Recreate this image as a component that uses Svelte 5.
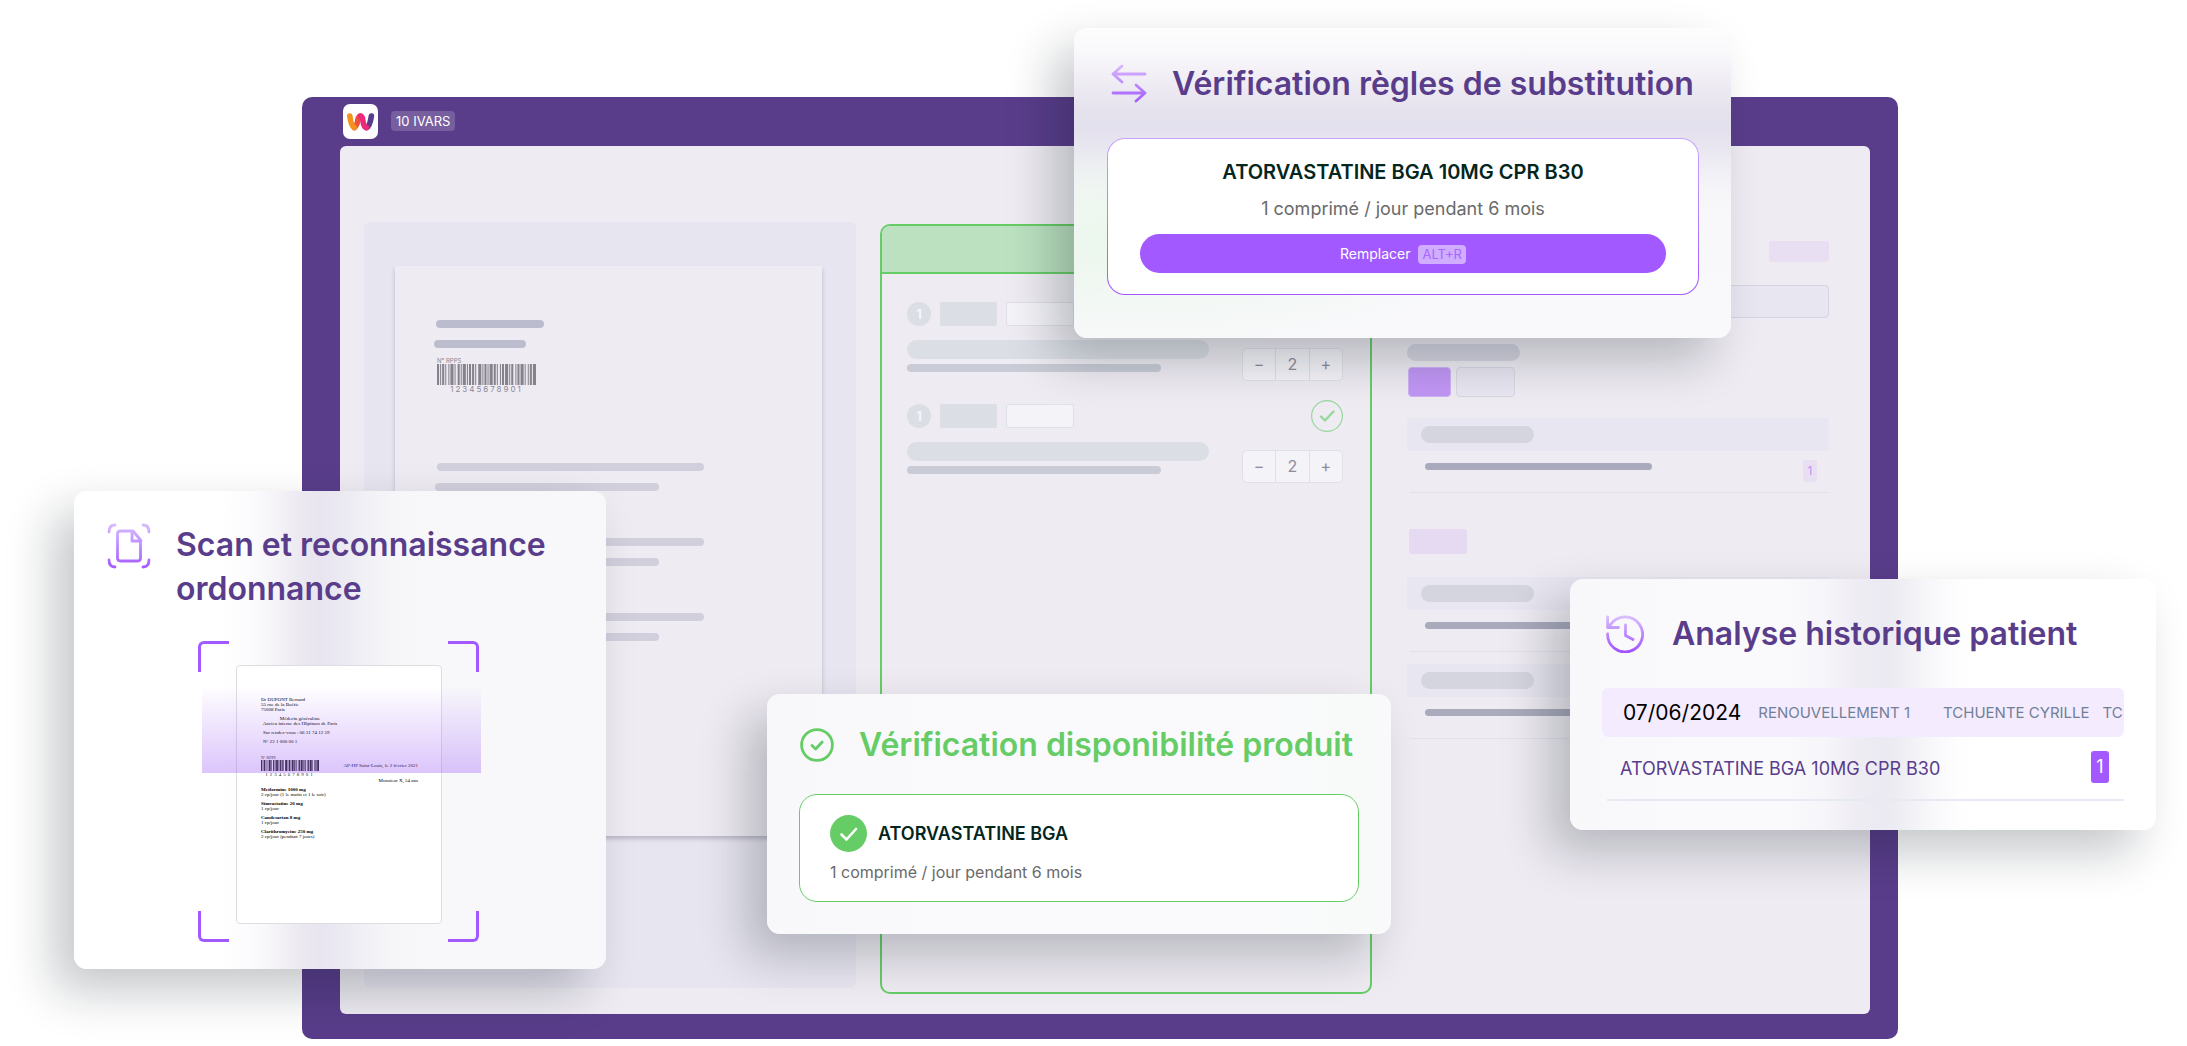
<script>
  const bars = [2,1,1,1,2,1,1,2,1,1,3,1,1,2,2,1,1,1,3,1,1,1,2,1,2,1,1,2,3,1,1,1,2,1,1,1,3,1,2,1,1,2,1,1,2,1,3,1,1,1,2,2,1,1,2,1,3,1,1,2,1,1,2,1,3];
  const strips = [];
  let total = 0;
  bars.forEach((w, i) => {
    if (i % 2 === 0) strips.push({ x: total, w });
    total += w;
  });
  const paragraphs = [1, 2, 3];
  const products = [{ ok: false }, { ok: true }];
  const history = [1, 2];
</script>

{#snippet barcode()}
  <svg class="bars" viewBox="0 0 {total} 20" preserveAspectRatio="none" aria-hidden="true">
    {#each strips as s}<rect x={s.x} y="0" width={s.w} height="20" />{/each}
  </svg>
{/snippet}

<main class="stage">
  <section class="app">
    <header class="topbar">
      <svg class="logo" viewBox="0 0 35 35" role="img" aria-label="Logo">
        <rect width="35" height="35" rx="7" fill="#fff" />
        <g fill="none" stroke-width="5.600" stroke-linecap="round">
          <path d="M28.400 12 Q26.800 22.500 23.600 23.600" stroke="#5a3c8c" />
          <path d="M11.400 23.600 Q14.400 21 15 15 Q16 12 17.500 12" stroke="#f0503c" />
          <path d="M17.400 12 Q19.400 12 19.800 16 Q20.600 23.600 23.400 23.600" stroke="#ec2a7b" />
          <path d="M6.800 12 Q8 22 11.200 23.600" stroke="#f4921e" />
        </g>
      </svg>
      <span class="tag">10 IVARS</span>
    </header>

    <div class="workspace">
      <div class="viewer">
        <div class="sheet">
          <div class="line dark l108"></div>
          <div class="line dark l92 second"></div>
          <div class="code">
            <span>N° RPPS</span>
            {@render barcode()}
            <span class="digits">12345678901</span>
          </div>
          {#each paragraphs as p (p)}
            <div class="para">
              <div class="line l267"></div>
              <div class="line l224 second"></div>
            </div>
          {/each}
        </div>
      </div>

      <div class="order">
        <div class="order-head"></div>
        {#each products as p}
          <div class="product">
            <div class="product-top">
              <span class="num">1</span>
              <div class="chip"></div>
              <div class="field"></div>
              {#if p.ok}
                <svg class="ok" viewBox="0 0 32 32" fill="none" stroke="#96d89b" aria-hidden="true">
                  <circle cx="16" cy="16" r="15.4" stroke-width="1.2" />
                  <path d="M10 16.5 14 20.5 22.5 11.5" stroke-width="2.4" stroke-linecap="round" stroke-linejoin="round" />
                </svg>
              {/if}
            </div>
            <div class="product-body">
              <div class="names">
                <div class="name"></div>
                <div class="sub"></div>
              </div>
              <div class="stepper">
                <button type="button" aria-label="Diminuer">−</button>
                <output>2</output>
                <button type="button" aria-label="Augmenter">+</button>
              </div>
            </div>
          </div>
        {/each}
      </div>

      <div class="record">
        <div class="lilac end"></div>
        <div class="search"></div>
        <div class="pill"></div>
        <div class="tabs"><div class="tab on"></div><div class="tab"></div></div>
        <div class="band"><div class="pill"></div></div>
        <div class="entry"><div class="bar"></div><span class="count">1</span></div>
        <div class="lilac start"></div>
        {#each history as h (h)}
          <div class="band again"><div class="pill"></div></div>
          <div class="entry short"><div class="bar"></div></div>
        {/each}
      </div>
    </div>
  </section>

  <article class="card rules">
    <header>
      <svg class="i-swap" viewBox="0 0 36 40" fill="none" stroke="url(#gs)" stroke-width="2.8" stroke-linecap="round" stroke-linejoin="round" aria-hidden="true">
        <defs><linearGradient id="gs" gradientUnits="userSpaceOnUse" x1="0" y1="0" x2="0" y2="40"><stop stop-color="#d9bdff" /><stop offset="1" stop-color="#a259ff" /></linearGradient></defs>
        <path d="M34 11H2M11 3 2 11l9 8M2 30h32M25 22l9 8-9 8" />
      </svg>
      <h2>Vérification règles de substitution</h2>
    </header>
    <div class="panel violet">
      <strong>ATORVASTATINE BGA 10MG CPR B30</strong>
      <p>1 comprimé / jour pendant 6 mois</p>
      <button type="button" class="replace">Remplacer <kbd>ALT+R</kbd></button>
    </div>
  </article>

  <article class="card scan">
    <header>
      <svg class="i-scan" viewBox="0 0 44 46" fill="none" stroke="url(#gd)" stroke-width="2.8" stroke-linecap="round" stroke-linejoin="round" aria-hidden="true">
        <defs><linearGradient id="gd" gradientUnits="userSpaceOnUse" x1="0" y1="0" x2="0" y2="46"><stop stop-color="#d9bdff" /><stop offset="1" stop-color="#a259ff" /></linearGradient></defs>
        <path d="M8 2q-6 0-6 7M36 2q6 0 6 7M2 37q0 7 6 7M42 37q0 7-6 7" />
        <path d="M26 8H13.500q-3 0-3 3V35q0 3 3 3h17q3 0 3-3V17ZM25 8v10h9" />
      </svg>
      <h2>Scan et reconnaissance ordonnance</h2>
    </header>
    <div class="frame">
      <i class="corner tl"></i><i class="corner tr"></i><i class="corner bl"></i><i class="corner br"></i>
      <div class="doc">
        <p>Dr DUPONT Bernard<br />55 rue de la Boétie<br />75008 Paris</p>
        <p class="mid">Médecin généraliste<br />Ancien interne des Hôpitaux de Paris</p>
        <p class="in">Sur rendez-vous : 06 31 74 12 59</p>
        <p class="in">N° 22 1 000 00 1</p>
        <div class="doc-row">
          <div class="code mini">
            <span>N° RPPS</span>
            {@render barcode()}
            <span class="digits">12345678901</span>
          </div>
          <p>AP-HP Saint-Louis, le 2 février 2021</p>
        </div>
        <p class="who">Monsieur X, 54 ans</p>
        <p class="rx"><b>Metformine 1000 mg</b><br />2 cp/jour (1 le matin et 1 le soir)</p>
        <p><b>Simvastatine 20 mg</b><br />1 cp/jour</p>
        <p><b>Candesartan 8 mg</b><br />1 cp/jour</p>
        <p><b>Clarithromycine 250 mg</b><br />2 cp/jour (pendant 7 jours)</p>
      </div>
      <div class="beam"></div>
    </div>
  </article>

  <article class="card stock">
    <header>
      <svg class="i-check" viewBox="0 0 34 34" fill="none" stroke="#66cc66" stroke-width="2.800" stroke-linecap="round" stroke-linejoin="round" aria-hidden="true">
        <circle cx="17" cy="17" r="15.400" /><path d="m12 17.500 3.600 3.500 6.600-7" />
      </svg>
      <h2>Vérification disponibilité produit</h2>
    </header>
    <div class="panel green">
      <div class="found">
        <svg viewBox="0 0 37 37" aria-hidden="true"><circle cx="18.500" cy="18.500" r="18.500" fill="#66cc66" /><path d="m11.500 19.500 5 5 9.500-10.500" fill="none" stroke="#fff" stroke-width="2.600" stroke-linecap="round" stroke-linejoin="round" /></svg>
        <strong>ATORVASTATINE BGA</strong>
      </div>
      <p>1 comprimé / jour pendant 6 mois</p>
    </div>
  </article>

  <article class="card past">
    <header>
      <svg class="i-clock" viewBox="0 0 38 38" fill="none" stroke="url(#gc)" stroke-width="2.800" stroke-linecap="round" stroke-linejoin="round" aria-hidden="true">
        <defs><linearGradient id="gc" gradientUnits="userSpaceOnUse" x1="0" y1="0" x2="0" y2="38"><stop stop-color="#dcc2ff" /><stop offset="1" stop-color="#a04fff" /></linearGradient></defs>
        <path d="M1.600 19A17.500 17.500 0 1 0 5 9L1.600 12.500M1.600 2v10.500H12.500M19.500 10v10.500l7.500 4" />
      </svg>
      <h2>Analyse historique patient</h2>
    </header>
    <div class="visit">
      <time datetime="2024-06-07">07/06/2024</time>
      <span>RENOUVELLEMENT 1</span>
      <span class="doctor">TCHUENTE CYRILLE</span>
      <span>TC</span>
    </div>
    <div class="drug"><span>ATORVASTATINE BGA 10MG CPR B30</span><b>1</b></div>
  </article>
</main>

<style>
  :global(body) { margin: 0; background: #fff; }
  .stage, .stage :global(*) { box-sizing: border-box; }
  .stage { position: relative; overflow: hidden; padding: 97px 289px 7px 302px; font-family: Inter, "Liberation Sans", sans-serif; }
  h2, p { margin: 0; }
  button { font: inherit; border: 0; padding: 0; }

  .app { background: #593d8b; border-radius: 10px; padding: 0 28px 25px 38px; }
  .topbar { height: 49px; padding: 7px 3px 0; display: flex; align-items: flex-start; gap: 13px; }
  .logo { width: 35px; height: 35px; }
  .tag { margin-top: 7px; height: 20px; padding: 0 5px; border-radius: 4px; background: #765e9f; color: #fff; font-size: 13px; line-height: 20px; }

  .workspace { background: #eeebf2; border-radius: 6px; padding: 76px 41px 20px 24px; display: grid; grid-template-columns: 492fr 492fr 433fr; column-gap: 24px; height: 868px; }
  .viewer { background: #e7e5f0; border-radius: 6px; padding: 44px 34px 0 31px; height: 766px; }
  .sheet { background: #eeebf2; height: 570px; padding: 54px 38px 0; box-shadow: 0 3px 4px rgba(60, 55, 80, .25); }
  .line { height: 8px; border-radius: 4px; background: #d1cfdc; margin-left: 3px; }
  .line.dark { background: #bbbdce; }
  .line.second { margin: 12px 0 0 1px; }
  .l108 { width: 108px; } .l92 { width: 92px; } .l267 { width: 267px; } .l224 { width: 224px; }
  .code { display: flex; flex-direction: column; width: 99px; margin: 10px 0 70px 4px; color: #8b8892; font-size: 6px; line-height: 6px; }
  .bars { display: block; width: 100%; height: 21px; fill: #86828c; }
  .digits { align-self: center; font-size: 8px; line-height: 8px; letter-spacing: 2px; }
  .para { margin: 0 0 47px 1px; }

  .order { border: 2px solid #66cc66; border-radius: 10px; margin-top: 2px; height: 770px; overflow: hidden; }
  .order-head { height: 48px; background: #bbe1c0; border-bottom: 2px solid #66cc66; }
  .product { padding: 28px 27px 0 25px; height: 102px; }
  .product-top { display: flex; align-items: center; height: 24px; }
  .num { width: 24px; height: 24px; border-radius: 50%; background: #dbdee5; color: #f6f5f9; font-size: 13px; font-weight: 700; line-height: 24px; text-align: center; margin-right: 9px; }
  .chip { width: 57px; height: 24px; border-radius: 2px; background: #dbdee5; margin-right: 9px; }
  .field { width: 68px; height: 24px; border-radius: 2px; background: #f4f3f8; border: 1px solid #dfe0e8; }
  .ok { width: 32px; height: 32px; margin-left: auto; }
  .product-body { display: flex; align-items: flex-start; justify-content: space-between; padding-top: 14px; }
  .name { width: 302px; height: 19px; border-radius: 10px; background: #dbdee5; }
  .sub { width: 254px; height: 8px; border-radius: 4px; background: #c9ccd6; margin-top: 5px; }
  .stepper { display: flex; width: 101px; height: 33px; margin-top: 8px; border: 1px solid #dfe0e8; border-radius: 5px; background: #f4f3f8; color: #8f8d9c; font-size: 16px; }
  .stepper > * { flex: 1; background: none; color: inherit; line-height: 31px; text-align: center; }
  .stepper output { border: solid #dfe0e8; border-width: 0 1px; }

  .record { padding: 19px 0 0 11px; display: flex; flex-direction: column; }
  .lilac { background: #e9dff3; border-radius: 3px; }
  .end { align-self: flex-end; width: 60px; height: 21px; }
  .start { width: 58px; height: 25px; margin: 36px 0 0 2px; background: #e5daf2; }
  .search { height: 33px; margin: 23px 0 26px; border: 1px solid #d3d4e0; border-radius: 4px; background: #e8e6f1; }
  .pill { width: 113px; height: 17px; border-radius: 9px; background: #d5d5e0; }
  .tabs { display: flex; gap: 5px; margin: 6px 0 21px 1px; }
  .tab { width: 59px; height: 30px; border: 1px solid #d8d7e3; border-radius: 4px; background: #e8e6f1; }
  .tab.on { width: 43px; background: #c096f4; border-color: #cfb1f6; }
  .band { height: 33px; padding: 8px 14px; background: #e8e6f1; border-radius: 3px; }
  .band.again { margin-top: 23px; }
  .entry { display: flex; justify-content: space-between; height: 42px; margin-left: 3px; padding: 9px 12px 0 15px; border-bottom: 1px solid #e2e0ea; }
  .bar { width: 227px; height: 7px; margin-top: 3px; border-radius: 4px; background: #a9aabc; }
  .count { width: 14px; height: 22px; border-radius: 2px; background: #e9dff3; color: #bd93f0; font-size: 12px; line-height: 22px; text-align: center; }
  .entry.short + .band.again { margin-top: 12px; }

  .card { position: absolute; border-radius: 13px; box-shadow: -20px 22px 48px rgba(10, 20, 30, .24); }
  .card header { display: flex; align-items: flex-start; }
  .card svg { flex: none; }
  h2 { color: #593d8b; font-size: 32px; line-height: 44px; font-weight: 600; }
  .panel { border-radius: 18px; background: #fff; }
  .panel strong { color: #04261c; font-weight: 600; }
  .panel p { color: #6a6a6a; }

  .rules {
    top: 28px; right: 456px; width: 657px; padding: 34px 32px 43px 33px;
    background:
      radial-gradient(360px 110px at 60px 215px, rgba(226, 246, 226, .6), rgba(226, 246, 226, 0)),
      linear-gradient(#fdfdfe, #fafafc 18px, #f5f3f8 38px, #ece9f2 62px, #e5e2ee 84px, #e4e1ee 100px, #e8e5f0 118px, #f0eff5 142px, #f6f6f9 165px, #f8f8fb 185px, #f9f9fb);
  }
  .rules header { padding: 0 0 32px 4px; white-space: nowrap; }
  .i-swap { width: 36px; height: 40px; margin: 1px 25px 0 0; }
  .violet { border: 1px solid transparent; background: linear-gradient(#fff, #fff) padding-box, linear-gradient(#c9a3ff, #a259ff) border-box; padding: 19px 32px 21px; text-align: center; font-size: 20px; line-height: 28px; display: flex; flex-direction: column; }
  .violet p { margin: 9px 0 11px; font-size: 18px; }
  .replace { height: 39px; border-radius: 20px; background: #a259ff; color: #fff; font-size: 14px; line-height: 39px; }
  kbd { display: inline-block; margin-left: 4px; padding: 0 4px; border-radius: 4px; background: #d0adff; color: #a866ff; font: inherit; font-size: 13px; line-height: 19px; }

  .scan {
    top: 491px; left: 74px; width: 532px; height: 478px; padding: 32px 33px 0;
    background: linear-gradient(90deg, #fff 150px, #fbfbfd 180px, #f4f2f7 205px, #ebe8f1 228px, #e8e5f0 247px, #eae8f1 264px, #f1f0f5 290px, #f6f6f9 318px, #f8f8fb 350px, #f8f8fb);
  }
  .scan h2 { width: 390px; }
  .i-scan { width: 44px; height: 46px; margin-right: 25px; }
  .frame { position: relative; width: 281px; height: 301px; margin: 30px 0 0 91px; padding: 24px 37px 0 38px; }
  .corner { position: absolute; width: 31px; height: 31px; border: 0 solid #a259ff; }
  .tl { top: 0; left: 0; border-width: 3px 0 0 3px; border-top-left-radius: 6px; }
  .tr { top: 0; right: 0; border-width: 3px 3px 0 0; border-top-right-radius: 6px; }
  .bl { bottom: 0; left: 0; border-width: 0 0 3px 3px; border-bottom-left-radius: 6px; }
  .br { bottom: 0; right: 0; border-width: 0 3px 3px 0; border-bottom-right-radius: 6px; }
  .beam { position: absolute; left: 4px; right: -2px; top: 44px; height: 88px; background: linear-gradient(rgba(162, 89, 255, 0), rgba(150, 80, 245, .33)); }
  .doc { height: 259px; padding: 31px 23px 0 24px; border: 1px solid #dedee2; border-radius: 4px; background: #fff; color: #000; font: 5px/5px "Liberation Serif", serif; white-space: nowrap; }
  .doc p { margin-bottom: 4px; }
  .doc .mid { width: 78px; text-align: center; }
  .doc .in { margin-left: 2px; }
  .doc-row { display: flex; justify-content: space-between; margin-top: 12px; }
  .doc-row p { margin: 7px 0 0; }
  .mini { width: 58px; margin: 0; font-size: 4px; line-height: 4px; color: #222; }
  .mini .bars { height: 11px; fill: #222; }
  .mini .digits { font-size: 5px; line-height: 7px; }
  .doc .who { text-align: right; margin-bottom: 4px; }

  .stock { top: 694px; left: 767px; width: 624px; padding: 29px 32px 32px; background: linear-gradient(90deg, #f8f8fb, #fafafc 30%, #fafafc 80%, #f8faf9 94%, #f9f9fb); }
  .stock h2 { color: #66cc66; }
  .stock header { padding: 0 0 27px 1px; white-space: nowrap; }
  .i-check { width: 34px; height: 34px; margin: 5px 25px 0 0; }
  .green { border: 1px solid #66cc66; padding: 20px 30px 16px; font-size: 18px; line-height: 28px; }
  .green p { margin-top: 7px; font-size: 16px; line-height: 26px; }
  .found { display: flex; align-items: center; gap: 11px; }
  .found svg { width: 37px; height: 37px; }

  .past {
    top: 579px; right: 31px; width: 586px; height: 251px; padding: 33px 32px 0;
    background: linear-gradient(90deg, #f8f8fa, #fafafc 120px, #fafafc 215px, #f6f5f9 255px, #efedf4 285px, #ebe9f1 312px, #efeef4 334px, #f8f8fb 360px, #fefefe 390px, #fff 410px);
  }
  .past header { padding: 0 0 32px 4px; white-space: nowrap; }
  .i-clock { width: 38px; height: 38px; margin: 3px 28px 0 0; }
  .visit { display: flex; align-items: center; height: 49px; padding-left: 21px; border-radius: 6px; background: #f4ebff; overflow: hidden; white-space: nowrap; color: #718096; font-size: 15px; }
  .visit time { color: #000; font-size: 21px; margin-right: 17px; }
  .doctor { margin: 0 13px 0 33px; }
  .drug { display: flex; justify-content: space-between; height: 64px; margin-left: 5px; padding: 14px 15px 0 13px; border-bottom: 2px solid #e6ebf3; color: #593d8b; font-size: 18px; line-height: 36px; }
  .drug b { width: 18px; height: 32px; border-radius: 3px; background: #a259ff; color: #fff; font-weight: 400; line-height: 32px; text-align: center; }
</style>
